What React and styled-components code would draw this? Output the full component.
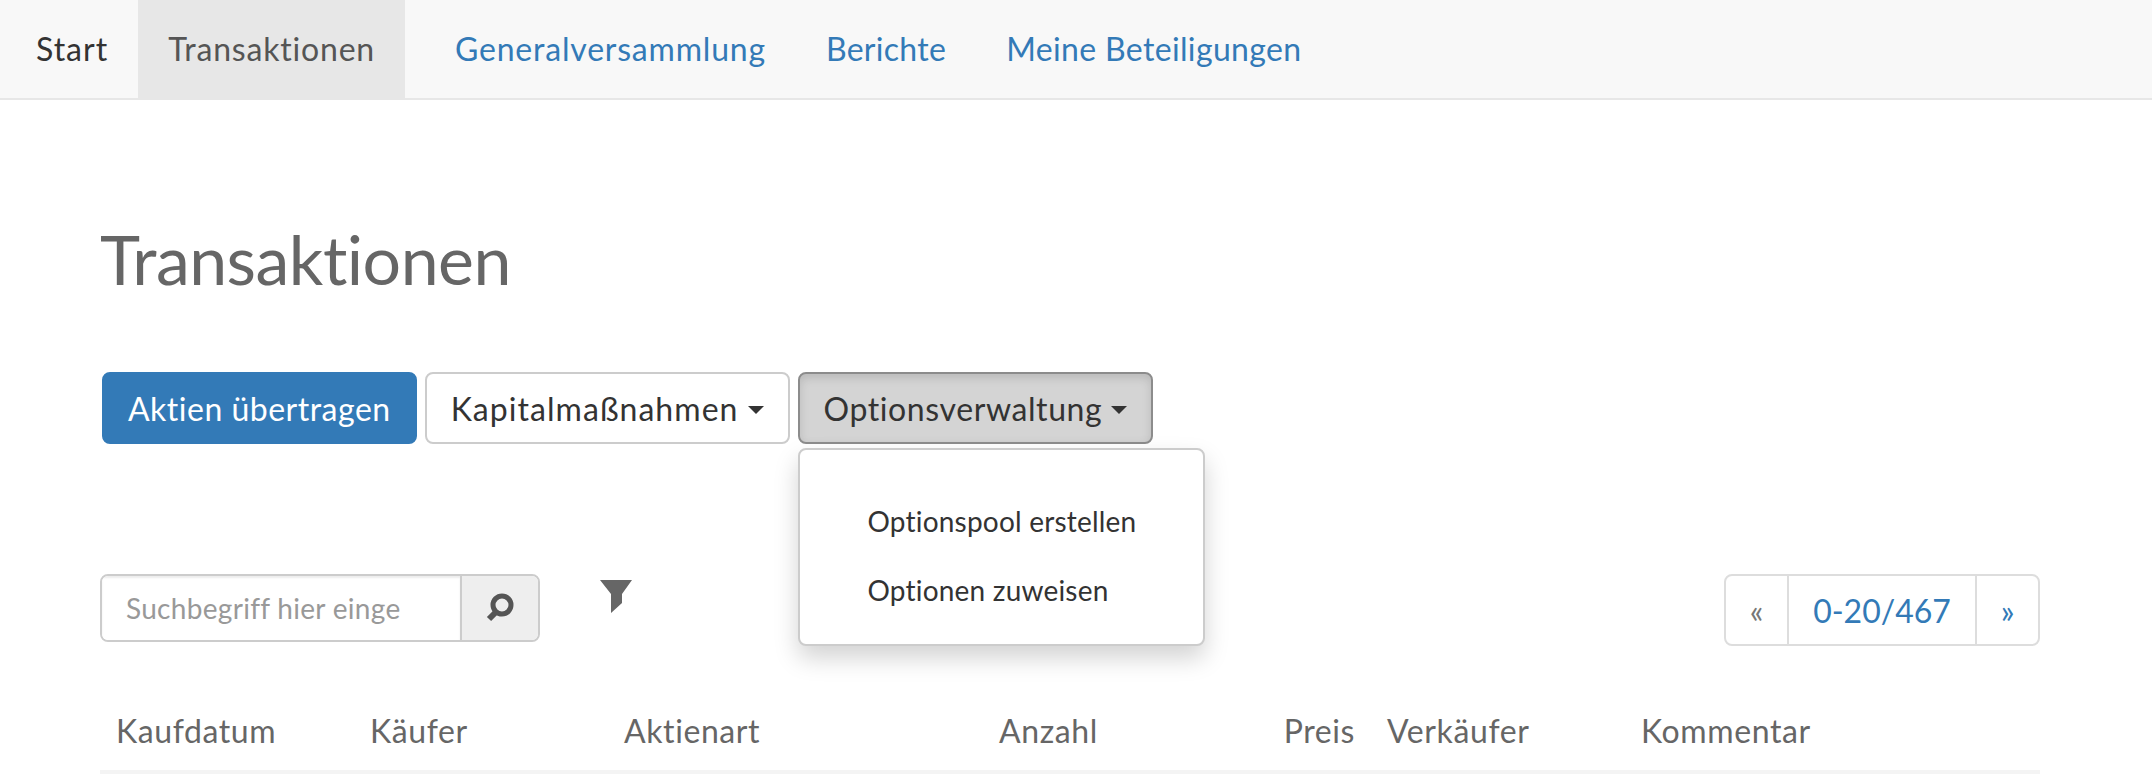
import React from "react";
import styled, { createGlobalStyle } from "styled-components";

const GlobalStyle = createGlobalStyle`
  html, body {
    margin: 0;
    padding: 0;
    background: #fff;
    font-family: "Lato", "Open Sans", sans-serif;
    color: #333;
  }
  * { box-sizing: border-box; }
`;

const Navbar = styled.nav`
  display: flex;
  height: 100px;
  padding-left: 6px;
  gap: 20px;
  background: #f8f8f8;
  border-bottom: 2px solid #e7e7e7;
`;

const NavGroup = styled.div`
  display: flex;
`;

const Tab = styled.a`
  display: flex;
  align-items: center;
  padding: 0 30px 2px;
  font-size: 32px;
  letter-spacing: ${(p) => p.$spacing || 0.8}px;
  color: ${(p) => (p.$active ? "#555" : p.$plain ? "#333" : "#337ab7")};
  background: ${(p) => (p.$active ? "#e7e7e7" : "transparent")};
`;

const Content = styled.main`
  padding: 0 112px 0 100px;
`;

const Title = styled.h1`
  margin: 0;
  padding-top: 118px;
  height: 272px;
  font-size: 68px;
  line-height: 82px;
  font-weight: 400;
  letter-spacing: -0.5px;
  color: #666;
`;

const Toolbar = styled.div`
  display: flex;
  gap: 8px;
  padding-left: 2px;
  height: 202px;
`;

const MenuWrap = styled.div`
  position: relative;
`;

const Button = styled.button`
  display: flex;
  align-items: center;
  gap: 9px;
  height: 72px;
  padding: 0 24px;
  font-family: inherit;
  font-size: 32px;
  letter-spacing: ${(p) => p.$spacing || 0.5}px;
  border-radius: 8px;
  border: 2px solid #ccc;
  color: #333;
  background: #fff;
  ${(p) =>
    p.$primary &&
    `
    background: #337ab7;
    border-color: #337ab7;
    color: #fff;
  `}
  ${(p) =>
    p.$open &&
    `
    background: #d4d4d4;
    border-color: #8c8c8c;
    box-shadow: inset 0 4px 10px rgba(0, 0, 0, 0.125);
  `}
`;

const Caret = styled.span`
  width: 0;
  height: 0;
  margin-top: 4px;
  border-top: 8px solid #333;
  border-left: 8px solid transparent;
  border-right: 8px solid transparent;
`;

const Menu = styled.ul`
  position: absolute;
  top: 76px;
  left: 0;
  width: 407px;
  height: 198px;
  margin: 0;
  padding: 37px 0 0;
  list-style: none;
  background: #fff;
  border: 2px solid #ccc;
  border-radius: 8px;
  box-shadow: 0 12px 25px rgba(0, 0, 0, 0.175);
`;

const MenuItem = styled.li`
  height: 69px;
  padding-left: 68px;
  font-size: 28px;
  line-height: 69px;
  letter-spacing: 0.2px;
  color: #333;
`;

const FilterRow = styled.div`
  display: flex;
  align-items: flex-start;
  height: 72px;
`;

const SearchBox = styled.div`
  display: flex;
  width: 440px;
  height: 68px;
  border: 2px solid #ccc;
  border-radius: 8px;
  overflow: hidden;
`;

const SearchInput = styled.input`
  width: 358px;
  border: 0;
  outline: 0;
  padding: 0 59px 0 24px;
  font-family: inherit;
  font-size: 28px;
  letter-spacing: 0.3px;
  color: #333;
  box-shadow: inset 0 2px 2px rgba(0, 0, 0, 0.075);
  &::placeholder { color: #999; opacity: 1; }
`;

const SearchButton = styled.span`
  display: flex;
  flex: 1;
  align-items: center;
  justify-content: center;
  background: #eee;
  border-left: 2px solid #ccc;
`;

const FilterIcon = styled.svg`
  width: 32px;
  height: 33px;
  margin: 6px 0 0 60px;
  fill: #666;
`;

const Pagination = styled.div`
  display: flex;
  height: 72px;
  margin-left: auto;
  border: 2px solid #ddd;
  border-radius: 8px;
`;

const PageCell = styled.a`
  display: flex;
  align-items: center;
  justify-content: center;
  width: ${(p) => p.$width}px;
  font-size: 32px;
  color: ${(p) => (p.$muted ? "#777" : "#337ab7")};
  & + & { border-left: 2px solid #ddd; }
`;

const TableHead = styled.div`
  display: grid;
  grid-template-columns: 254px 254px 375px 205px 183px 254px 1fr;
  align-items: center;
  height: 80px;
  margin-top: 48px;
  padding-bottom: 4px;
  border-bottom: 4px solid #f4f4f4;
`;

const HeadCell = styled.div`
  padding: 0 16px;
  font-size: 32px;
  letter-spacing: 0.6px;
  color: #666;
  text-align: ${(p) => (p.$right ? "right" : "left")};
`;

const columns = [
  { label: "Kaufdatum" },
  { label: "Käufer" },
  { label: "Aktienart" },
  { label: "Anzahl" },
  { label: "Preis", right: true },
  { label: "Verkäufer" },
  { label: "Kommentar" },
];

export default function App() {
  return (
    <>
      <GlobalStyle />
      <Navbar>
        <NavGroup>
          <Tab $plain $spacing={1}>Start</Tab>
          <Tab $active>Transaktionen</Tab>
        </NavGroup>
        <NavGroup>
          <Tab>Generalversammlung</Tab>
          <Tab $spacing={0.3}>Berichte</Tab>
          <Tab $spacing={0.35}>Meine Beteiligungen</Tab>
        </NavGroup>
      </Navbar>
      <Content>
        <Title>Transaktionen</Title>
        <Toolbar>
          <Button $primary>Aktien übertragen</Button>
          <Button $spacing={1.05}>
            Kapitalmaßnahmen <Caret />
          </Button>
          <MenuWrap>
            <Button $open $spacing={0.6}>
              Optionsverwaltung <Caret />
            </Button>
            <Menu>
              <MenuItem>Optionspool erstellen</MenuItem>
              <MenuItem>Optionen zuweisen</MenuItem>
            </Menu>
          </MenuWrap>
        </Toolbar>
        <FilterRow>
          <SearchBox>
            <SearchInput placeholder="Suchbegriff hier eingeben" />
            <SearchButton>
              <svg width="30" height="30" viewBox="0 0 30 30" fill="none">
                <circle cx="17" cy="12" r="9" stroke="#555" strokeWidth="5" />
                <path d="M10 20 L4 26" stroke="#555" strokeWidth="6" />
              </svg>
            </SearchButton>
          </SearchBox>
          <FilterIcon viewBox="0 0 32 33">
            <polygon points="0,0 32,0 22,14 22,23 11,33 11,14" />
          </FilterIcon>
          <Pagination>
            <PageCell $muted $width={61}>«</PageCell>
            <PageCell $width={188}>0-20/467</PageCell>
            <PageCell $width={63}>»</PageCell>
          </Pagination>
        </FilterRow>
        <TableHead>
          {columns.map((col) => (
            <HeadCell key={col.label} $right={col.right}>{col.label}</HeadCell>
          ))}
        </TableHead>
      </Content>
    </>
  );
}
